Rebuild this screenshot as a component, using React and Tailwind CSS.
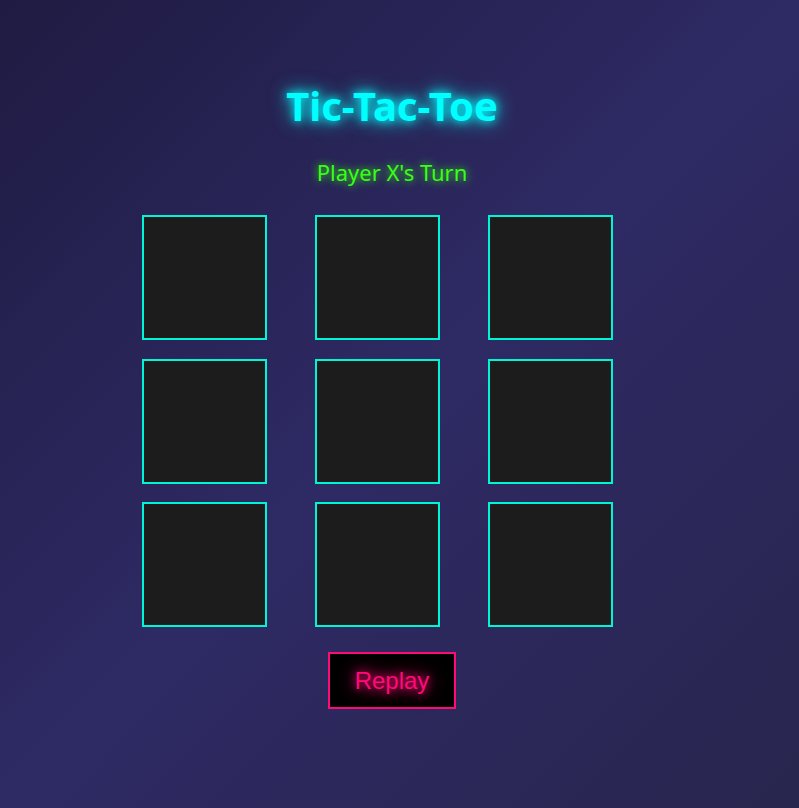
export default function App() {
  const cells = Array.from({ length: 9 })

  return (
    <div className="min-h-screen w-full bg-[linear-gradient(135deg,#1f1b42_0%,#2e2a64_50%,#28254e_100%)]">
      <div className="w-[784px] flex flex-col items-center pt-[76px] pb-[100px] font-['Noto_Sans',sans-serif]">
        <h1 className="text-[40px] leading-[60px] font-bold text-[#00ffff] [text-shadow:0_0_10px_#00ffff,0_0_20px_#00ffff]">
          Tic-Tac-Toe
        </h1>
        <p className="mt-[20px] text-[22px] leading-[32px] text-[#39ff14] [text-shadow:0_0_8px_#39ff14]">
          Player X's Turn
        </p>
        <div className="mt-[27px] w-[500px] grid grid-cols-[repeat(3,125px)] gap-x-[48px] gap-y-[18.5px]">
          {cells.map((_, i) => (
            <button
              key={i}
              className="w-[125px] h-[125px] bg-[#1c1c1c] border-2 border-[#00f5d4]"
            />
          ))}
        </div>
        <button className="mt-[25px] px-[25px] py-3 bg-black border-2 border-[#ff0a78] text-[24px] leading-[29px] text-[#ff0a78] font-['Liberation_Sans',Arial,sans-serif] [text-shadow:0_0_10px_#ff0a78,0_0_20px_#ff0a78]">
          Replay
        </button>
      </div>
    </div>
  )
}
